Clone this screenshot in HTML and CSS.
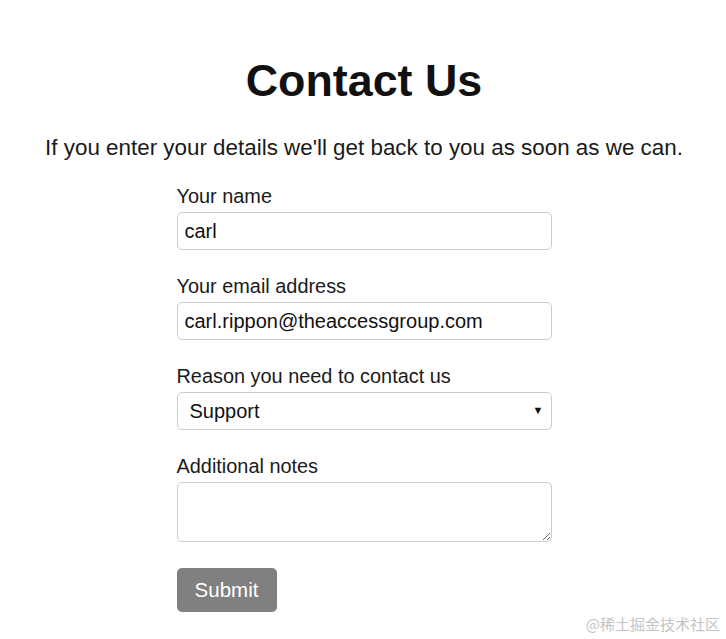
FILE: index.html
```html
<!DOCTYPE html>
<html>
<head>
<meta charset="utf-8">
<link rel="stylesheet" href="styles.css">
</head>
<body>
<div class="page">
  <h1 class="title">Contact Us</h1>
  <p class="intro">If you enter your details we'll get back to you as soon as we can.</p>
  <form class="form">
    <div class="field">
      <label class="label" for="name">Your name</label>
      <input class="control" id="name" type="text" value="carl">
    </div>
    <div class="field">
      <label class="label" for="email">Your email address</label>
      <input class="control" id="email" type="text" value="carl.rippon@theaccessgroup.com">
    </div>
    <div class="field">
      <label class="label" for="reason">Reason you need to contact us</label>
      <div class="select-wrap">
        <select class="control select" id="reason">
          <option>Support</option>
        </select>
        <span class="arrow">&#9660;</span>
      </div>
    </div>
    <div class="field">
      <label class="label" for="notes">Additional notes</label>
      <textarea class="control notes" id="notes"></textarea>
    </div>
    <div class="actions">
      <button class="submit" type="button">Submit</button>
    </div>
  </form>
</div>
<div class="watermark">@稀土掘金技术社区</div>
</body>
</html>
```
FILE: styles.css
```css
html, body {
  margin: 0;
  padding: 0;
  background: #fff;
}
body {
  font-family: "Liberation Sans", Arial, sans-serif;
  color: #1a1a1a;
  width: 726px;
  height: 639px;
  overflow: hidden;
  position: relative;
}
.page {
  display: flex;
  flex-direction: column;
  align-items: center;
  padding-top: 55px;
  padding-left: 2px;
}
.title {
  margin: 0;
  font-size: 44.8px;
  line-height: 50px;
  font-weight: bold;
  color: #111;
}
.intro {
  margin: 31px 0 0;
  font-size: 22.4px;
  line-height: 24px;
  color: #1a1a1a;
  white-space: nowrap;
}
.form {
  width: 375px;
  margin-top: 25px;
  display: flex;
  flex-direction: column;
}
.field {
  display: flex;
  flex-direction: column;
  margin-bottom: 25px;
}
.label {
  font-size: 19.9px;
  line-height: 22px;
  margin-bottom: 5px;
  color: #1a1a1a;
}
.control {
  box-sizing: border-box;
  width: 375px;
  height: 38px;
  border: 1px solid #ccc;
  border-radius: 5px;
  padding: 0 7px;
  font-family: "Liberation Sans", Arial, sans-serif;
  font-size: 20px;
  color: #111;
  background: #fff;
  outline: none;
  display: block;
}
.select-wrap {
  position: relative;
}
.select {
  -webkit-appearance: none;
  appearance: none;
  padding-left: 12px;
}
.arrow {
  position: absolute;
  right: 8px;
  top: 12px;
  font-size: 11px;
  color: #111;
  pointer-events: none;
}
.notes {
  height: 60px;
  resize: vertical;
  padding: 6px 7px;
}
.actions {
  padding-top: 1px;
}
.submit {
  display: block;
  width: 100px;
  height: 44px;
  border: none;
  border-radius: 5px;
  background: #808080;
  color: #fff;
  font-family: "Liberation Sans", Arial, sans-serif;
  font-size: 20.5px;
  padding: 0;
}
.watermark {
  position: absolute;
  right: 6px;
  bottom: 5px;
  font-family: "Noto Sans CJK SC", sans-serif;
  font-size: 15px;
  color: #c4c4c4;
}
```
